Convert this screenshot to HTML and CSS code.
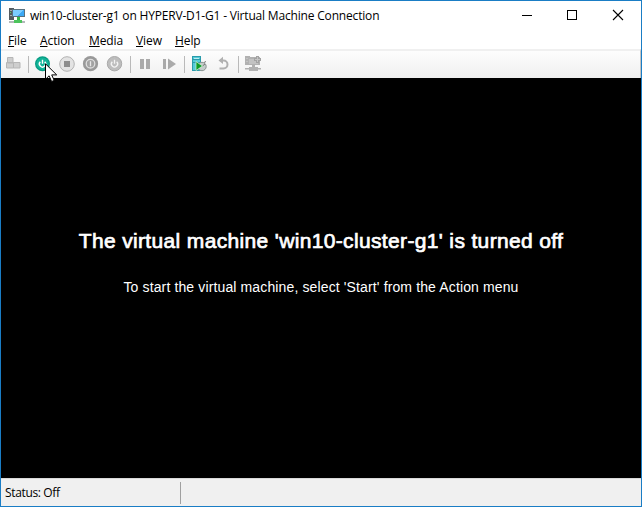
FILE: index.html
```html
<!DOCTYPE html>
<html lang="en">
<head>
<meta charset="utf-8">
<title>Virtual Machine Connection</title>
<link rel="stylesheet" href="styles.css">
</head>
<body>
<div class="window">
  <header class="titlebar">
    <svg class="app-icon" width="18" height="18" viewBox="0 0 18 18" shape-rendering="crispEdges">
      <path fill="#555b60" d="M1 1h5v12H1z"/><path fill="#a3abb0" d="M2 3h2v1H2zM2 8h2v1H2z"/><path fill="#54d160" d="M2 5h1v1H2z"/>
      <path fill="#59717f" d="M4 2h13v8H4z"/><path fill="#3ba8f5" d="M5 3h11v6H5z"/><path fill="#7bccff" d="M5 3h10L9 9H5z"/>
      <path fill="#35b44a" d="M9 10h3v3h-3z"/><path fill="#b4b8ba" d="M1 14h16v2H1z"/><path fill="#4cc45c" d="M6 13h8v3H6z"/>
    </svg>
    <h1 class="title">win10-cluster-g1 on HYPERV-D1-G1 - Virtual Machine Connection</h1>
    <div class="controls">
      <svg width="46" height="29" viewBox="0 0 46 29" shape-rendering="crispEdges"><path fill="#000" d="M18 14h10v1H18z"/></svg>
      <svg width="46" height="29" viewBox="0 0 46 29" shape-rendering="crispEdges"><path fill="none" stroke="#000" d="M17.5 9.5h9v9h-9z"/></svg>
      <svg width="46" height="29" viewBox="0 0 46 29"><path fill="none" stroke="#000" stroke-width="1.1" d="M17 9l10 10M27 9L17 19"/></svg>
    </div>
  </header>
  <nav class="menu">
    <span class="file"><u>F</u>ile</span><span class="action"><u>A</u>ction</span><span class="media"><u>M</u>edia</span><span class="view"><u>V</u>iew</span><span class="help"><u>H</u>elp</span>
  </nav>
  <div class="toolbar">
    <svg class="tool" viewBox="0 0 24 26"><g fill="#cecece" stroke="#b6b6b6"><path d="M6.500 6.500h5.500v5.500h-5.500zM5.500 11.500h7v5.500h-7zM12.500 11.500h6.500v5.500h-6.500z"/></g></svg>
    <i class="sep"></i>
    <div class="tool start">
      <svg viewBox="0 0 24 26"><circle cx="11.500" cy="12.700" r="7.500" fill="#079b83"/><circle cx="11.500" cy="12.700" r="6.200" fill="#12b398"/><path fill="none" stroke="#fff" stroke-width="1.400" d="M9.300 10.700a3.100 3.100 0 1 0 4.400 0M11.500 8.700v4"/></svg>
      <svg class="cursor" width="13" height="20" viewBox="0 0 13 20"><path fill="#fff" stroke="#000" d="M.5 .8v15.500l3.600-3.500 2.500 5.700 2.600-1.100-2.500-5.500h5z"/></svg>
    </div>
    <svg class="tool" viewBox="0 0 24 26"><circle cx="12" cy="13" r="7.300" fill="#e3e3e3" stroke="#b3b3b3"/><path fill="#8d8d8d" d="M9 10h6v6H9z"/></svg>
    <svg class="tool" viewBox="0 0 24 26"><circle cx="11.500" cy="12.700" r="7.600" fill="#999"/><circle cx="11.500" cy="12.700" r="4.300" fill="#a2a2a2" stroke="#ddd" stroke-width="1.300"/><path stroke="#e7e7e7" stroke-width="1.300" d="M11.500 10.200v5"/></svg>
    <svg class="tool" viewBox="0 0 24 26"><circle cx="11.500" cy="12.700" r="7.200" fill="#bdbdbd" stroke="#aaa"/><path fill="none" stroke="#f3f3f3" stroke-width="1.300" d="M9.300 10.700a3.100 3.100 0 1 0 4.400 0M11.500 8.700v4"/></svg>
    <i class="sep"></i>
    <svg class="tool" viewBox="0 0 24 26"><path fill="#aaa" d="M7 8h4v10H7zM13 8h4v10h-4z"/></svg>
    <svg class="tool" viewBox="0 0 24 26"><path fill="#aaa" d="M6 8h3v10H6zM11 7.500l8 5.500-8 5.500z"/></svg>
    <i class="sep"></i>
    <svg class="tool" viewBox="0 0 24 26">
      <path fill="#2a9bab" d="M5 5h9v15H5z"/><path fill="#53cbd8" d="M6 6h7v2H6zM6 9h7v2H6zM6 12h3v7H6z"/><path fill="#bcecf0" d="M7 7h5v1H7z"/>
      <circle cx="15" cy="15.500" r="4.200" fill="#c4cccb" stroke="#8a9391"/><path stroke="#777" d="M17 11.500l2-1M15.500 15l2.500-2"/>
      <path fill="#0b9c27" stroke="#d8f5d7" stroke-width=".7" d="M9 10.500l6.500 4.500-6.500 4.500z"/>
    </svg>
    <svg class="tool" viewBox="0 0 24 26"><path fill="none" stroke="#b0b0b0" stroke-width="2" d="M9.500 9.500h3a3.900 3.900 0 0 1 0 8H8.500"/><path fill="#b0b0b0" d="M7.500 9.500l4.500-3.700v7.200z"/></svg>
    <i class="sep"></i>
    <svg class="tool" viewBox="0 0 24 26" shape-rendering="crispEdges">
      <path fill="#b1b1b1" d="M4 5h5v9H4zM6 6h13v8H6zM11 14h3v3h-3zM4 17h16v2H4zM8 16h9v4H8z"/><path fill="#c2c2c2" d="M8 8h9v5H8zM5 7h2v1H5zM5 10h2v1H5z"/><path fill="#a2a2a2" d="M15 5h3v2h2v3h-2v2h-3v-2h-2V7h2z"/><path fill="#d3d3d3" d="M4 18h4v1H4zM17 18h3v1h-3z"/><path fill="#c4c4c4" d="M16 6h1v2h2v1h-2v2h-1V9h-2V8h2z"/>
    </svg>
  </div>
  <main class="screen">
    <h2>The virtual machine 'win10-cluster-g1' is turned off</h2>
    <p>To start the virtual machine, select 'Start' from the Action menu</p>
  </main>
  <footer class="status"><span>Status: Off</span></footer>
</div>
</body>
</html>
```

FILE: styles.css
```css
* { box-sizing: border-box; }
body { margin: 0; }
.window {
  width: 642px; height: 507px; border: 1px solid #1a7dc5; background: #fff; color: #000;
  display: flex; flex-direction: column; overflow: hidden;
  font: 12px "Open Sans", "Noto Sans", sans-serif;
}
.titlebar { height: 29px; display: flex; align-items: center; padding-left: 7px; flex: none; }
.app-icon { margin-right: 4px; }
.title { margin: 0; font-size: 12px; font-weight: 400; line-height: 29px; white-space: nowrap; letter-spacing: -0.18px; }
.controls { display: flex; margin-left: auto; margin-right: -1px; }
.controls svg { display: block; }
.menu { height: 19px; padding-left: 7px; display: flex; line-height: 21px; flex: none; }
.menu span { letter-spacing: -0.1px; white-space: nowrap; }
.menu u { text-underline-offset: 1px; text-decoration-thickness: 1px; }
.file { width: 32px; }
.action { width: 49px; }
.media { width: 47px; }
.view { width: 39px; }
.toolbar {
  height: 29px; border-top: 2px solid #f0f0f0; border-right: 1px solid #c4c4c4; flex: none;
  display: flex; background: linear-gradient(#fdfdfd, #f0f0f0);
}
.tool { width: 24px; height: 26px; display: block; flex: none; }
.sep { width: 6px; height: 17px; margin-top: 5px; flex: none; background: linear-gradient(#b9b9b9, #b9b9b9) 3px 0 / 1px 100% no-repeat; }
.start { position: relative; }
.cursor { position: absolute; left: 14px; top: 12px; z-index: 1; }
.screen {
  flex: 1; background: #000; color: #fff; text-align: center; white-space: nowrap;
  font-family: "Liberation Sans", Arial, sans-serif;
}
.screen h2 { margin: 151px 0 0; font-size: 21px; line-height: 24px; font-weight: 400; letter-spacing: 0.35px; -webkit-text-stroke: 0.7px #fff; }
.screen p { margin: 26px 0 0; font-size: 14px; line-height: 16px; letter-spacing: 0.13px; }
.status { height: 28px; flex: none; display: flex; align-items: center; background: #f0f0f0; border-top: 1px solid #d9d9d9; }
.status span { width: 180px; height: 22px; padding-left: 4px; line-height: 22px; letter-spacing: -0.35px; border-right: 1px solid #a0a0a0; }
```
